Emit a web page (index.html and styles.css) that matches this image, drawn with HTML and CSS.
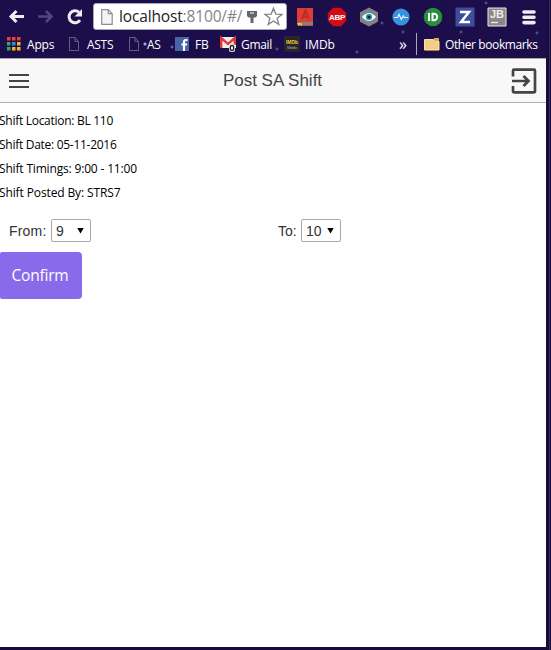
FILE: index.html
```
<!DOCTYPE html>
<html lang="en">
<head>
<meta charset="utf-8">
<title>Post SA Shift</title>
<link rel="stylesheet" href="styles.css">
</head>
<body>
<div class="window">
  <header class="chrome">
    <div class="toolbar">
      <svg class="nav" width="18" height="18" viewBox="0 0 18 18"><path d="M8.500 3L3 8.500 8.500 14M3 8.500h13" fill="none" stroke="#ececf4" stroke-width="3"/></svg>
      <svg class="nav" width="18" height="18" viewBox="0 0 18 18"><path d="M9 3l5.500 5.500L9 14M14 8.500H1" fill="none" stroke="#51477a" stroke-width="2.600"/></svg>
      <svg class="nav" width="18" height="18" viewBox="0 0 18 18"><path d="M14 12.200A6 6 0 1 1 13 4.200" fill="none" stroke="#ececf4" stroke-width="3"/><path d="M16 1v7.500H8.500z" fill="#ececf4"/></svg>
      <div class="omnibox">
        <svg class="page" width="12" height="16" viewBox="0 0 12 16"><path d="M.7.7h6.500l4 4v10.600H.7zM7.200.7v4h4" fill="#f4f4f4" stroke="#8d8d8d" stroke-width="1.200"/></svg>
        <span class="url">localhost<span class="path">:8100/#/</span></span>
        <svg class="key" width="12" height="16" viewBox="0 0 12 16"><path d="M1 2h10v5L9.500 8.500H7.500V14H4.500V8.500H2.500L1 7z" fill="#666"/><path d="M4 4h4" stroke="#ddd" stroke-width="1.300"/></svg>
        <svg class="star" width="19" height="19" viewBox="0 0 19 19"><path d="M9.500 1.200l2.300 5.900 6.200.3-4.900 3.900 1.700 6.200-5.300-3.500-5.300 3.500 1.700-6.200L1 7.400l6.200-.3z" fill="#fff" stroke="#808080" stroke-width="1.300"/></svg>
      </div>
      <div class="extensions">
        <svg width="20" height="20" viewBox="0 0 20 20"><path d="M2 1h16v18H4l-2-2z" fill="#c92e2b"/><path d="M3 15h15v3.500H3z" fill="#858078"/><path d="M2 1h16v14H2z" fill="#dc3d34"/><path d="M7 12L10.500 3.500 14 12M8.500 9.500h4.500" fill="none" stroke="#b52c27" stroke-width="1.800"/><path d="M2 16h5v3l-2-1-2 1z" fill="#e8bd32"/></svg>
        <svg width="20" height="20" viewBox="0 0 20 20"><path d="M6.200.8h7.600l5.400 5.400v7.600l-5.400 5.400H6.200L.8 13.800V6.200z" fill="#d20b16"/><text x="2" y="13.300" class="abp">ABP</text></svg>
        <svg width="20" height="20" viewBox="0 0 20 20"><path d="M10 .5l9 4.700v9.600l-9 4.700-9-4.700V5.200z" fill="#7e8285"/><path d="M3 10q7-8 14 0-7 8-14 0" fill="#fff"/><circle cx="10" cy="10" r="3.200" fill="#2a9fbd"/><circle cx="10" cy="10" r="1.600" fill="#123"/></svg>
        <svg width="20" height="20" viewBox="0 0 20 20"><circle cx="10" cy="10" r="8.600" fill="#3892df"/><path d="M3 10.500h3.500l1.500-3 2.300 5 2-3.500 1 1.500H17" fill="none" stroke="#e7f7ff" stroke-width="1.200"/></svg>
        <svg width="20" height="20" viewBox="0 0 20 20"><circle cx="10" cy="10" r="9.300" fill="#278e3c"/><path d="M6 6v8M9.500 6.800v6.400h1.500a3.200 3.200 0 0 0 0-6.400z" fill="none" stroke="#fff" stroke-width="2"/></svg>
        <svg width="20" height="20" viewBox="0 0 20 20"><path d="M.5.500h19v19H.5z" fill="#3e4d9c"/><path d="M5 5h9L6 15h9" fill="none" stroke="#fff" stroke-width="2.500"/></svg>
        <svg width="20" height="20" viewBox="0 0 20 20"><path d="M1 1h18v18H1z" fill="#888" stroke="#e8e8e8"/><text x="3" y="11" class="jb">JB</text><path d="M4 15.500h7" stroke="#eee" stroke-width="1.300"/></svg>
        <svg width="20" height="20" viewBox="0 0 20 20"><path d="M5 5h10M5 10.300h10M5 15.600h10" stroke="#ececf2" stroke-width="3.600" stroke-linecap="round"/></svg>
      </div>
    </div>
    <nav class="bookmarks">
      <div class="bookmark apps">
        <svg width="14" height="14" viewBox="0 0 14 14"><path d="M0 0h3.500v3.500H0zM5 0h3.500v3.500H5zM10 0h3.500v3.500H10z" fill="#ef3e32"/><path d="M0 5h3.500v3.500H0z" fill="#38ad50"/><path d="M5 5h3.500v3.500H5z" fill="#2c8df0"/><path d="M10 5h3.500v3.500H10zM5 10h3.500v3.500H5zM10 10h3.500v3.500H10z" fill="#f5b51d"/><path d="M0 10h3.500v3.500H0z" fill="#38ad50"/></svg>
        <span>Apps</span>
      </div>
      <div class="bookmark asts"><svg width="10" height="14" viewBox="0 0 10 14"><path d="M.5.500H6l3.500 4v9H.5zM6 .5v4h3.500" fill="none" stroke="#66617b"/></svg><span>ASTS</span></div>
      <div class="bookmark as"><svg width="10" height="14" viewBox="0 0 10 14"><path d="M.5.500H6l3.500 4v9H.5zM6 .5v4h3.500" fill="none" stroke="#66617b"/></svg><span>AS</span></div>
      <div class="bookmark fb"><svg width="14" height="14" viewBox="0 0 14 14"><path d="M0 0h14v14H0z" fill="#4666a8"/><path d="M12.500 3H11q-2 0-2 2v9M6.500 7.500h5.500" fill="none" stroke="#fff" stroke-width="2.200"/></svg><span>FB</span></div>
      <div class="bookmark gmail"><svg width="17" height="16" viewBox="0 0 17 16"><path d="M0 1h16v11H0z" fill="#eee"/><path d="M1.200 12V2L8 8l6.800-6v7" fill="none" stroke="#dc3a34" stroke-width="2.400"/><rect x="9" y="8" width="6" height="8" rx="2" fill="#eee"/><ellipse cx="12" cy="12" rx="1.700" ry="2.600" fill="none" stroke="#111" stroke-width="1.200"/></svg><span>Gmail</span></div>
      <div class="bookmark imdb"><svg width="16" height="16" viewBox="0 0 16 16"><path d="M0 0h16v16H0z" fill="#27252b"/><text x="2" y="8" class="imdb-top" textLength="12" lengthAdjust="spacingAndGlyphs">IMDb</text><text x="3" y="13" class="imdb-sub" textLength="10">Mobile</text></svg><span>IMDb</span></div>
      <div class="bookmark other">
        <span class="more">»</span>
        <span class="divider"></span>
        <svg width="16" height="14" viewBox="0 0 16 14"><path d="M1 3h9V1h5v3H1z" fill="#d5a85c"/><path d="M.5 2.500h9l1.500 2h4V13H.5z" fill="#f4cc86" stroke="#fae2af"/><path d="M1 13.500h14" stroke="#b77b34"/></svg>
        <span class="other-label">Other bookmarks</span>
      </div>
    </nav>
  </header>
  <div class="app">
    <div class="bar">
      <svg width="20" height="14" viewBox="0 0 20 14"><path d="M0 1h20M0 7h20M0 13h20" stroke="#444" stroke-width="2"/></svg>
      <h1>Post SA Shift</h1>
      <svg width="26" height="26" viewBox="0 0 26 26"><path d="M2 8.500V2.700q0-1 1-1h20q1 0 1 1v20.600q0 1-1 1H3q-1 0-1-1V18M1 13h16M12.500 8l5 5-5 5" fill="none" stroke="#444" stroke-width="2.700"/></svg>
    </div>
    <main>
      <div class="details">
        <p class="d1">Shift Location: BL 110</p>
        <p class="d2">Shift Date: 05-11-2016</p>
        <p class="d3">Shift Timings: 9:00 - 11:00</p>
        <p class="d4">Shift Posted By: STRS7</p>
      </div>
      <div class="times">
        <div class="field"><span class="from">From:</span><div class="select"><span>9</span><i></i></div></div>
        <div class="field"><span class="to">To:</span><div class="select"><span>10</span><i></i></div></div>
      </div>
      <button class="confirm">Confirm</button>
    </main>
  </div>
</div>
</body>
</html>
```
FILE: styles.css
```
* { box-sizing: border-box; }
body { margin: 0; background: #fff; font-family: "Open Sans", sans-serif; }
svg { display: block; flex: none; }
.window {
  width: 551px;
  height: 650px;
  background: linear-gradient(90deg, #160b3b 549px, #5c5763 549px, #160b3b 550px);
  overflow: hidden;
}
.chrome {
  width: 547px;
  height: 58px;
  background:
    radial-gradient(circle at 382px 23px, #6470a5 0, transparent 2px),
    radial-gradient(circle at 486px 3px, #6470a5 0, transparent 2px),
    radial-gradient(circle at 145px 44px, #a0a6d7 0 1px, transparent 2px),
    radial-gradient(circle at 172px 47px, #8c92c7 0, transparent 2px),
    radial-gradient(circle at 277px 49px, #6470a5 0, transparent 2px),
    radial-gradient(circle at 357px 52px, #6470a5 0, transparent 2px),
    radial-gradient(circle at 403px 32px, #6470a5 0, transparent 2px),
    radial-gradient(circle at 461px 32px, #6470a5 0, transparent 2px),
    radial-gradient(circle at 537px 33px, #6470a5 0, transparent 2px),
    #1b0e4b;
}
.toolbar { height: 33px; display: flex; align-items: center; padding-left: 8px; }
.nav { margin-right: 11px; }
.omnibox {
  width: 194px; height: 27px; margin-left: -2px;
  display: flex; align-items: center;
  background: #fff; border: 1px solid #aaa5b9; border-radius: 3px;
}
.page { margin-left: 7px; }
.url { width: 124px; margin-left: 6px; font-size: 15.500px; line-height: 25px; color: #222; white-space: nowrap; letter-spacing: -.15px; }
.path { color: #858585; }
.key { margin-left: 3px; }
.star { margin-left: 6px; }
.extensions { display: grid; grid-template-columns: repeat(8, 32px); justify-items: center; margin-left: 2px; }
.abp { font: bold 8px "Liberation Sans", sans-serif; letter-spacing: -.3px; fill: #fff; }
.jb { font: bold 11px "Liberation Sans", sans-serif; fill: #eee; }
.bookmarks { height: 24px; display: grid; grid-template-columns: 62px 60px 46px 45px 63px 107px 1fr; padding-left: 7px; color: #fff; font-size: 12px; }
.bookmark { display: flex; align-items: center; white-space: nowrap; height: 22px; }
.apps { gap: 6px; letter-spacing: -.2px; }
.asts, .as { gap: 8px; letter-spacing: -.3px; }
.fb, .gmail, .imdb { gap: 5px; letter-spacing: -.3px; }
.fb { gap: 6px; }
.gmail { gap: 4px; }
.imdb { padding-left: 1px; letter-spacing: -.1px; }
.imdb-top { font: bold 6px "Liberation Sans", sans-serif; fill: #f1ce37; }
.imdb-sub { font: 4px "Liberation Sans", sans-serif; fill: #aaa; }
.more { width: 22px; padding-left: 9px; font-size: 16px; line-height: 20px; }
.divider { width: 1px; height: 22px; margin: 0 7px 0 4px; background: #aaa6bb; }
.other-label { margin-left: 5px; letter-spacing: -.4px; }
.app { width: 546px; height: 589px; background: #fff; }
.bar { height: 45px; display: flex; align-items: center; justify-content: space-between; padding: 0 9px; background: #f8f8f8; border-top: 1px solid #aaa; border-bottom: 1px solid #b2b2b2; }
.bar h1 { margin: 0 0 0 5px; font: 400 17px/44px "Liberation Sans", sans-serif; color: #444; }
.details { padding-top: 6px; }
.details p { height: 24px; margin: 0 0 0 -1px; font-size: 12px; line-height: 24px; color: #000; white-space: nowrap; }
.details .d1 { letter-spacing: -.28px; }
.details .d2 { letter-spacing: -.28px; }
.details .d3 { letter-spacing: -.17px; }
.details .d4 { letter-spacing: -.12px; }
.times { display: grid; grid-template-columns: 269px 1fr; padding: 14px 0 0 9px; }
.field { display: flex; align-items: center; height: 23px; font: 14px/23px "Liberation Sans", sans-serif; color: #333; }
.field span { padding-top: 2px; }
.from { width: 38px; letter-spacing: .2px; }
.to { width: 19px; }
.select { display: flex; align-items: center; justify-content: space-between; width: 40px; height: 23px; margin-left: 4px; padding: 0 6px 0 4px; border: 1px solid #a9a9a9; border-radius: 2px; }
.select i { width: 7px; height: 6px; background: #000; clip-path: polygon(0 0, 100% 0, 50% 100%); }
.confirm { display: block; width: 82px; height: 47px; margin-top: 10px; padding: 0 2px 0 0; border: 0; border-radius: 2px 4px 4px 2px; background: #886aea; color: #fff; font: 15.500px/47px "Open Sans", sans-serif; letter-spacing: -.2px; text-align: center; }
```
